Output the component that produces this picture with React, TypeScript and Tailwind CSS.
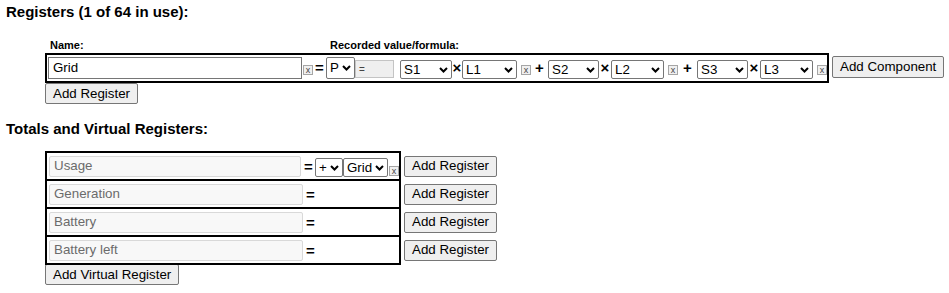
import React from 'react';

const font = { fontFamily: '"Liberation Sans", Arial, sans-serif' };

function Chevron() {
  return (
    <svg width="9" height="6" viewBox="0 0 9 6" className="shrink-0">
      <path d="M1 1l3.5 3.5L8 1" fill="none" stroke="#000" strokeWidth="2" />
    </svg>
  );
}

function Select({ value, w, h = 'h-[19px]' }: { value: string; w: string; h?: string }) {
  return (
    <div className={`${w} ${h} flex shrink-0 items-center justify-between rounded-[2px] border border-[#767676] bg-white pl-[3px] pr-[3px] text-[13.33px] leading-none text-black`}>
      <span>{value}</span>
      <Chevron />
    </div>
  );
}

function XBox({ cls = 'mb-[4px]' }: { cls?: string }) {
  return (
    <span className={`${cls} flex h-[10px] w-[10px] shrink-0 items-center justify-center border border-[#a6a6a6] bg-[#f0f0f0] text-[9px] leading-none text-[#444]`}>
      x
    </span>
  );
}

function Sym({ s, w }: { s: string; w: string }) {
  return <span className={`${w} shrink-0 self-center text-center text-[15px] font-bold leading-none`}>{s}</span>;
}

function Button({ label, cls = '' }: { label: string; cls?: string }) {
  return (
    <button className={`${cls} h-[21px] shrink-0 whitespace-nowrap rounded-[2px] border border-[#767676] bg-[#efefef] px-[7px] text-[13.33px] leading-none text-black`}>
      {label}
    </button>
  );
}

const virtuals = ['Usage', 'Generation', 'Battery', 'Battery left'];

export default function App() {
  return (
    <div className="min-h-[293px] w-[949px] bg-white px-[6px] text-black" style={font}>
      <h3 className="pt-[3px] text-[15px] font-bold leading-[18px]">Registers (1 of 64 in use):</h3>

      <div className="ml-[39px] mt-[17px]">
        <div className="flex text-[11px] font-bold leading-[14px]">
          <span className="ml-[5px] w-[280px]">Name:</span>
          <span>Recorded value/formula:</span>
        </div>

        <div className="mt-[1px] flex items-center">
          <div className="flex h-[30px] w-[784px] shrink-0 items-end border-2 border-black pb-[2px] pl-[1px]">
            <div className="flex h-[22px] w-[254px] shrink-0 items-center border border-[#767676] bg-white px-[4px] text-[13.33px]">
              Grid
            </div>
            <XBox cls="mb-[4px] ml-[1px]" />
            <Sym s="=" w="w-[13px]" />
            <Select value="P" w="w-[29px]" h="h-[22px]" />
            <div className="mb-[1px] h-[18px] w-[39px] shrink-0 border border-[#c4c4c4] bg-[#efefef] px-[3px] text-[10px] leading-[18px] text-[#444]">=</div>
            <div className="ml-[6px]"><Select value="S1" w="w-[52px]" /></div>
            <Sym s="×" w="w-[10px]" />
            <Select value="L1" w="w-[55px]" />
            <XBox cls="mb-[4px] ml-[4px]" />
            <Sym s="+" w="w-[17px]" />
            <Select value="S2" w="w-[51px]" />
            <Sym s="×" w="w-[12px]" />
            <Select value="L2" w="w-[53px]" />
            <XBox cls="mb-[4px] ml-[4px]" />
            <Sym s="+" w="w-[19px]" />
            <Select value="S3" w="w-[51px]" />
            <Sym s="×" w="w-[12px]" />
            <Select value="L3" w="w-[53px]" />
            <XBox cls="mb-[4px] ml-[4px]" />
          </div>
          <Button label="Add Component" cls="ml-[3px] mt-[-2px] h-[22px]" />
        </div>

        <Button label="Add Register" cls="block" />
      </div>

      <h3 className="mt-[16px] text-[15px] font-bold leading-[18px]">Totals and Virtual Registers:</h3>

      <div className="ml-[39px] mt-[13px]">
        <div className="flex">
          <div className="w-[356px] divide-y-2 divide-black border-2 border-black">
            {virtuals.map((name, i) => (
              <div key={name} className="box-content flex h-[26px] items-center pl-[2px]">
                <div className="flex h-[21px] w-[254px] items-center rounded-[2px] border border-[#d9d9d9] bg-[#f8f8f8] px-[4px] text-[13.33px] text-[#6b6b6b]">
                  {name}
                </div>
                <span className="ml-[3px] w-[11px] text-[15px] font-bold leading-none">=</span>
                {i === 0 && (
                  <div className="flex items-end self-end pb-[2px]">
                    <Select value="+" w="w-[28px]" />
                    <Select value="Grid" w="w-[45px]" />
                    <XBox cls="mb-[1px] ml-[1px]" />
                  </div>
                )}
              </div>
            ))}
          </div>
          <div className="ml-[3px] flex flex-col gap-[2px] pt-[2px]">
            {virtuals.map((name) => (
              <div key={name} className="flex h-[26px] items-center">
                <Button label="Add Register" cls="h-[20px]" />
              </div>
            ))}
          </div>
        </div>
        <Button label="Add Virtual Register" cls="-mt-[1px] block h-[20px]" />
      </div>
    </div>
  );
}
